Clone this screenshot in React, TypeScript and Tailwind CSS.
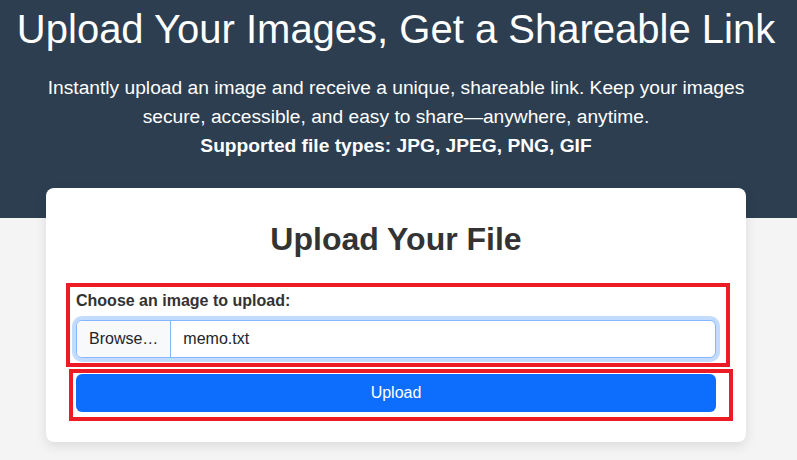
import React from 'react';

const App = () => {
  return (
    <div className="min-h-screen bg-[#f4f4f4] font-['Liberation_Sans',Arial,sans-serif]">
      {/* Hero */}
      <header className="bg-[#2c3e50] text-white text-center pt-[5px] pb-[58px] pr-[5px]">
        <h1 className="text-[40px] leading-[48px] font-normal">
          Upload Your Images, Get a Shareable Link
        </h1>
        <p className="mt-[21px] mx-auto max-w-[720px] text-[19.2px] leading-[28.8px]">
          Instantly upload an image and receive a unique, shareable link. Keep your images secure,
          accessible, and easy to share—anywhere, anytime.
          <br />
          <strong>Supported file types: JPG, JPEG, PNG, GIF</strong>
        </p>
      </header>

      {/* Upload card */}
      <div className="pr-[5px]">
        <main className="-mt-[30px] mx-auto w-[700px] bg-white rounded-lg p-[30px] shadow-[0_4px_12px_rgba(0,0,0,0.1)]">
          <h2 className="mt-[2px] text-center text-[32px] leading-[38.4px] font-bold text-[#333] mb-[30px]">
            Upload Your File
          </h2>

          <div className="relative">
            <div className="pointer-events-none absolute -left-[10px] -right-[14px] -top-[6px] -bottom-[9px] border-4 border-[#ed1c24]"></div>
            <label className="block text-[16px] leading-6 font-bold text-[#333] mb-[7px]">
              Choose an image to upload:
            </label>
            <div className="flex h-[38px] items-stretch rounded-[6px] border border-[#86b7fe] bg-white shadow-[0_0_0_4px_rgba(13,110,253,0.25)] overflow-hidden text-[16px] text-[#212529]">
              <span className="flex items-center px-3 bg-[#f8f9fa] border-r border-[#86b7fe]">Browse…</span>
              <span className="flex items-center px-3">memo.txt</span>
            </div>
          </div>

          <div className="relative mt-4">
            <div className="pointer-events-none absolute -left-[7px] -right-[17px] -top-[5px] -bottom-[9px] border-4 border-[#ed1c24]"></div>
            <button className="w-full h-[38px] rounded-[6px] bg-[#0d6efd] text-white text-[16px]">
              Upload
            </button>
          </div>
        </main>
      </div>
    </div>
  );
};

export default App;
